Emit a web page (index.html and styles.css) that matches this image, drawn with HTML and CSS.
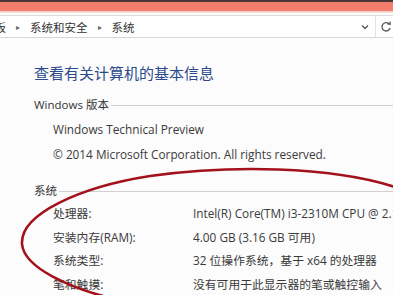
FILE: index.html
```html
<!DOCTYPE html>
<html>
	<head>
		<meta charset="UTF-8">
		<title>系统</title>
		<link rel="stylesheet" href="styles.css">
	</head>
	<body>
		<div class="titlebar"></div>
		<nav class="address">
			<div class="crumbs">
				<span>控制面板</span><span class="sep">&#9656;</span>
				<span>系统和安全</span><span class="sep">&#9656;</span>
				<span>系统</span>
			</div>
			<svg class="drop" width="8" height="6" viewBox="0 0 8 6"><path d="M1 1.5 L4 4.5 L7 1.5" fill="none" stroke="#555" stroke-width="1.3"/></svg>
			<div class="refresh">
				<svg width="12" height="12" viewBox="0 0 12 12"><path d="M9.5 3.2 A4.2 4.2 0 1 0 10.2 7" fill="none" stroke="#555" stroke-width="1.3"/><path d="M7.2 2.6 L10 3.4 L10.2 0.6" fill="none" stroke="#555" stroke-width="1.3"/></svg>
			</div>
		</nav>
		<main class="content">
			<h1>查看有关计算机的基本信息</h1>

			<h2 class="group">Windows 版本</h2>
			<p class="line first">Windows Technical Preview</p>
			<p class="line">© 2014 Microsoft Corporation. All rights reserved.</p>

			<h2 class="group sys">系统</h2>
			<dl class="props">
				<dt>处理器:</dt><dd>Intel(R) Core(TM) i3-2310M CPU @ 2.10GHz</dd>
				<dt>安装内存(RAM):</dt><dd>4.00 GB (3.16 GB 可用)</dd>
				<dt>系统类型:</dt><dd>32 位操作系统，基于 x64 的处理器</dd>
				<dt>笔和触摸:</dt><dd>没有可用于此显示器的笔或触控输入</dd>
			</dl>
		</main>
		<!-- red marker circle drawn over the screenshot -->
		<svg class="marker" width="393" height="295" viewBox="0 0 393 295">
			<path d="M395 187 C330 166, 230 165, 150 176 C80 187, 20 214, 22 244 C24 268, 70 288, 114 299" fill="none" stroke="#a3121c" stroke-width="2.6" stroke-linecap="round"/>
		</svg>
	</body>
</html>
```

FILE: styles.css
```css
html, body {
	margin: 0;
	width: 393px;
	height: 295px;
	overflow: hidden;
}
body {
	position: relative;
	background: #fcfcfc;
	color: #3a3a3a;
	font-family: "Open Sans", "Noto Sans CJK SC", sans-serif;
	font-size: 11.8px;
}
.titlebar {
	height: 13px;
	background: linear-gradient(#4c3935 0, #4c3935 2px, #f27c6b 2px, #f48070 11px, #f7c2ba 11px, #fbe9e6 13px);
}
.address {
	display: flex;
	align-items: center;
	height: 21px;
	margin-top: 2px;
	border-top: 1px solid #dcdcdc;
	border-bottom: 1px solid #d6d6d6;
	background: #fff;
}
.crumbs {
	flex: 1;
	display: flex;
	align-items: center;
	margin-left: -40px;
	white-space: nowrap;
	font-family: "Noto Sans CJK SC", sans-serif;
	font-size: 11.5px;
	color: #333;
}
.crumbs .sep {
	font-size: 8px;
	color: #666;
	margin: 0 10px;
}
.drop {
	margin-right: 6px;
}
.refresh {
	display: flex;
	align-items: center;
	height: 100%;
	padding-left: 4px;
	border-left: 1px solid #e2e2e2;
	margin-right: -4px;
	width: 17px;
}
.content {
	padding-left: 34px;
	white-space: nowrap;
}
h1 {
	margin: 24px 0 0 0;
	font-family: "Noto Sans CJK SC", sans-serif;
	font-size: 15px;
	font-weight: 400;
	line-height: 22px;
	color: #2b4a8c;
}
.group {
	display: flex;
	align-items: center;
	margin: 12px 0 0 0;
	font-size: 11.5px;
	font-weight: 400;
	line-height: 18px;
	color: #333;
}
.group::after {
	content: "";
	flex: 1;
	height: 1px;
	margin-left: 2px;
	background: #cfcfcf;
}
.group.sys {
	margin-top: 19px;
}
.line {
	margin: 7px 0 0 19px;
	line-height: 18px;
}
.line.first {
	margin-top: 6px;
}
.props {
	display: grid;
	grid-template-columns: 140px 1fr;
	row-gap: 5px;
	margin: 4px 0 0 19px;
	line-height: 18.5px;
}
.props dt, .props dd {
	margin: 0;
}
.props dd {
	overflow: hidden;
}
.marker {
	position: absolute;
	left: 0;
	top: 0;
	pointer-events: none;
}
```
